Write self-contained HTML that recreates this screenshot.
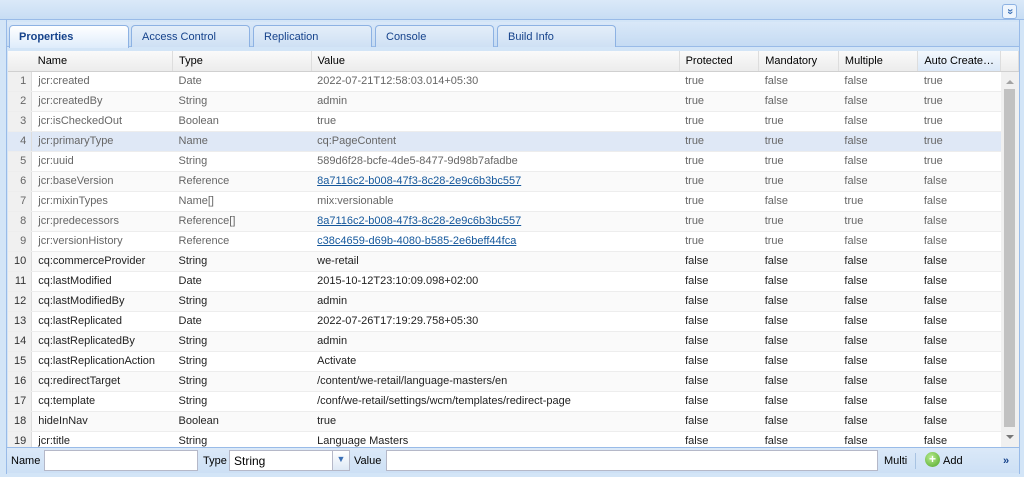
<!DOCTYPE html>
<html><head><meta charset="utf-8"><style>
*{box-sizing:border-box;margin:0;padding:0}
body{width:1024px;height:477px;overflow:hidden;background:#d3e5f7;font-family:"Liberation Sans",Arial,sans-serif;font-size:11px;color:#000;position:relative}
.top{position:absolute;left:0;top:0;width:1024px;height:20px;background:linear-gradient(#dbe9f8,#c7ddf4);border-bottom:1px solid #99bbe8}
.col{position:absolute;right:7px;top:4px;width:15px;height:15px;border:1px solid #8db2e3;border-radius:3px;background:#eef5fd;color:#3a6fb5;font-size:11px;line-height:12px;text-align:center;font-weight:bold;transform:rotate(90deg)}
.frame{position:absolute;left:6px;top:20px;width:1014px;height:454px;background:#d3e5f7;border-left:1px solid #99bbe8;border-right:1px solid #99bbe8}
.strip{position:absolute;left:7px;top:22px;width:1012px;height:25px;background:linear-gradient(#d9e8f8,#c5dbf3);border-bottom:1px solid #99bbe8}
.tab{position:absolute;top:25px;height:22px;border:1px solid #8db2e3;border-bottom:none;border-radius:4px 4px 0 0;background:linear-gradient(#e4eef9,#cfe0f4);color:#15428b;font-size:11px;padding:5px 0 0 10px}
.tab.act{background:linear-gradient(#fff,#deecfb);font-weight:bold;height:23px;padding-left:9px}
.grid{position:absolute;left:8px;top:51px;width:1011px;height:396px;background:#fff;overflow:hidden}
table{border-collapse:collapse;table-layout:fixed;position:absolute;left:0;top:0}
td,th{height:20px;white-space:nowrap;overflow:hidden;padding:0 6px;font-weight:normal;text-align:left;font-size:11px;color:#222}
th{height:20px;background:linear-gradient(#fafafa,#ececec);border-right:1px solid #ddd;border-bottom:1px solid #d0d0d0;color:#000}
th.ac{background:linear-gradient(#f3f8fd,#dbe8f7)}
td{border-bottom:1px solid #ededed}
td.n{background:#f0f0f0;text-align:right;padding-right:5px;border-right:1px solid #ddd;color:#333}
tr.a td{background:#fafafa}tr.a td.n{background:#f0f0f0}
tr.s td{background:#dfe8f6}
tr.g td{color:#666}
td a{color:#15589c;text-decoration:underline}
.sb{position:absolute;left:993px;top:21px;width:18px;height:375px;background:#f0f0f0}
.sb .th{position:absolute;left:3px;top:17px;width:11px;height:338px;background:#c1c1c1}
.sb .u,.sb .d{position:absolute;left:5px;width:0;height:0;border-left:4px solid transparent;border-right:4px solid transparent}
.sb .u{top:8px;border-bottom:4px solid #a3a3a3}.sb .d{bottom:8px;border-top:4px solid #777}
.bar{position:absolute;left:7px;top:447px;width:1012px;height:26px;background:linear-gradient(#dbe9f8,#cde0f5);border-top:1px solid #99bbe8}
.bar span{position:absolute;top:7px;font-size:11px}
.inp{position:absolute;top:2px;height:21px;background:#fff;border:1px solid #b5b8c8}
</style></head><body>
<div class="top"><div class="col">»</div></div>
<div class="frame"></div>
<div class="strip"></div>
<div class="tab act" style="left:9px;width:120px">Properties</div>
<div class="tab" style="left:131px;width:119px">Access Control</div>
<div class="tab" style="left:253px;width:119px">Replication</div>
<div class="tab" style="left:375px;width:119px">Console</div>
<div class="tab" style="left:497px;width:119px">Build Info</div>
<div class="grid">
<table>
<colgroup><col style="width:22px"><col style="width:141px"><col style="width:140px"><col style="width:370px"><col style="width:80px"><col style="width:80px"><col style="width:80px"><col style="width:80px"><col style="width:18px"></colgroup>
<tr><th style="border-right:none"></th><th>Name</th><th>Type</th><th>Value</th><th>Protected</th><th>Mandatory</th><th>Multiple</th><th class="ac">Auto Create…</th><th></th></tr>
<tr class="g"><td class="n">1</td><td>jcr:created</td><td>Date</td><td>2022-07-21T12:58:03.014+05:30</td><td>true</td><td>false</td><td>false</td><td>true</td><td></td></tr>
<tr class="g a"><td class="n">2</td><td>jcr:createdBy</td><td>String</td><td>admin</td><td>true</td><td>false</td><td>false</td><td>true</td><td></td></tr>
<tr class="g"><td class="n">3</td><td>jcr:isCheckedOut</td><td>Boolean</td><td>true</td><td>true</td><td>true</td><td>false</td><td>true</td><td></td></tr>
<tr class="g s"><td class="n">4</td><td>jcr:primaryType</td><td>Name</td><td>cq:PageContent</td><td>true</td><td>true</td><td>false</td><td>true</td><td></td></tr>
<tr class="g"><td class="n">5</td><td>jcr:uuid</td><td>String</td><td>589d6f28-bcfe-4de5-8477-9d98b7afadbe</td><td>true</td><td>true</td><td>false</td><td>true</td><td></td></tr>
<tr class="g a"><td class="n">6</td><td>jcr:baseVersion</td><td>Reference</td><td><a>8a7116c2-b008-47f3-8c28-2e9c6b3bc557</a></td><td>true</td><td>true</td><td>false</td><td>false</td><td></td></tr>
<tr class="g"><td class="n">7</td><td>jcr:mixinTypes</td><td>Name[]</td><td>mix:versionable</td><td>true</td><td>false</td><td>true</td><td>false</td><td></td></tr>
<tr class="g a"><td class="n">8</td><td>jcr:predecessors</td><td>Reference[]</td><td><a>8a7116c2-b008-47f3-8c28-2e9c6b3bc557</a></td><td>true</td><td>true</td><td>true</td><td>false</td><td></td></tr>
<tr class="g"><td class="n">9</td><td>jcr:versionHistory</td><td>Reference</td><td><a>c38c4659-d69b-4080-b585-2e6beff44fca</a></td><td>true</td><td>true</td><td>false</td><td>false</td><td></td></tr>
<tr class="a"><td class="n">10</td><td>cq:commerceProvider</td><td>String</td><td>we-retail</td><td>false</td><td>false</td><td>false</td><td>false</td><td></td></tr>
<tr><td class="n">11</td><td>cq:lastModified</td><td>Date</td><td>2015-10-12T23:10:09.098+02:00</td><td>false</td><td>false</td><td>false</td><td>false</td><td></td></tr>
<tr class="a"><td class="n">12</td><td>cq:lastModifiedBy</td><td>String</td><td>admin</td><td>false</td><td>false</td><td>false</td><td>false</td><td></td></tr>
<tr><td class="n">13</td><td>cq:lastReplicated</td><td>Date</td><td>2022-07-26T17:19:29.758+05:30</td><td>false</td><td>false</td><td>false</td><td>false</td><td></td></tr>
<tr class="a"><td class="n">14</td><td>cq:lastReplicatedBy</td><td>String</td><td>admin</td><td>false</td><td>false</td><td>false</td><td>false</td><td></td></tr>
<tr><td class="n">15</td><td>cq:lastReplicationAction</td><td>String</td><td>Activate</td><td>false</td><td>false</td><td>false</td><td>false</td><td></td></tr>
<tr class="a"><td class="n">16</td><td>cq:redirectTarget</td><td>String</td><td>/content/we-retail/language-masters/en</td><td>false</td><td>false</td><td>false</td><td>false</td><td></td></tr>
<tr><td class="n">17</td><td>cq:template</td><td>String</td><td>/conf/we-retail/settings/wcm/templates/redirect-page</td><td>false</td><td>false</td><td>false</td><td>false</td><td></td></tr>
<tr class="a"><td class="n">18</td><td>hideInNav</td><td>Boolean</td><td>true</td><td>false</td><td>false</td><td>false</td><td>false</td><td></td></tr>
<tr><td class="n">19</td><td>jcr:title</td><td>String</td><td>Language Masters</td><td>false</td><td>false</td><td>false</td><td>false</td><td></td></tr>
</table>
<div class="sb"><div class="u"></div><div class="th"></div><div class="d"></div></div>
</div>
<div class="bar">
<span style="left:4px">Name</span>
<div class="inp" style="left:37px;width:154px"></div>
<span style="left:196px">Type</span>
<div class="inp" style="left:222px;width:105px;padding:3px 0 0 4px;font-size:12px">String</div>
<div class="inp" style="left:325px;width:18px;background:linear-gradient(#fff,#dde8f5);color:#3a6fb5;font-size:9px;text-align:center;padding-top:3px">▼</div>
<span style="left:347px">Value</span>
<div class="inp" style="left:379px;width:492px"></div>
<span style="left:877px">Multi</span>
<div style="position:absolute;left:908px;top:5px;width:1px;height:16px;background:#a8c3e2"></div>
<div style="position:absolute;left:918px;top:4px;width:15px;height:15px;border-radius:50%;background:radial-gradient(circle at 40% 35%,#b8ec8f,#4ea526);color:#fff;font-weight:bold;font-size:12px;line-height:14px;text-align:center">+</div>
<span style="left:936px">Add</span>
<span style="left:996px;color:#15428b;font-weight:bold">»</span>
</div>
</body></html>
